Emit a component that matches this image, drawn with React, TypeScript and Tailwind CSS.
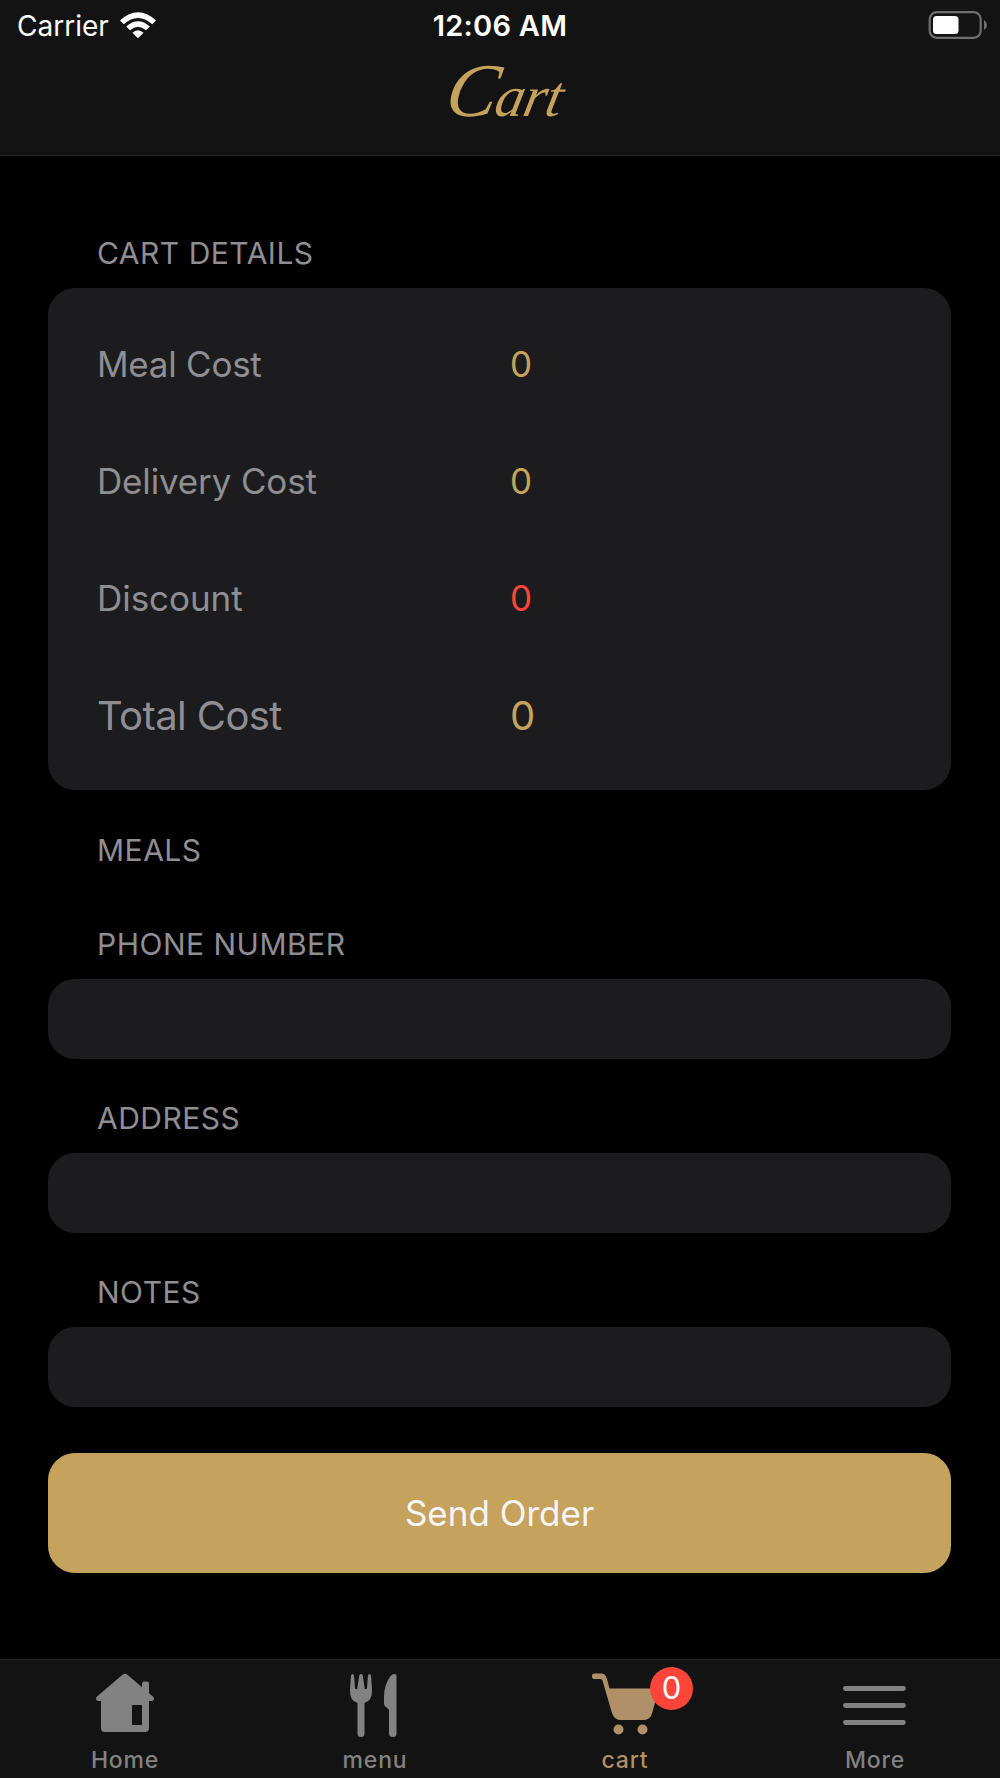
import type { ReactNode } from 'react';

const costs = [
  { label: 'Meal Cost', value: 0, labelStyle: 'text-[35px] tracking-[-0.25px]', valueStyle: 'text-[35px] text-[#c6a35d]' },
  { label: 'Delivery Cost', value: 0, labelStyle: 'text-[35px] tracking-[-0.15px]', valueStyle: 'text-[35px] text-[#c6a35d]' },
  { label: 'Discount', value: 0, labelStyle: 'text-[35px] tracking-[-0.05px]', valueStyle: 'text-[35px] text-[#ff453a]' },
  { label: 'Total Cost', value: 0, labelStyle: 'text-[40px] tracking-[-0.6px]', valueStyle: 'text-[40px] text-[#c6a35d]' },
];

const fields = ['Phone Number', 'Address', 'Notes'];

function StatusBar() {
  return (
    <div className="grid h-[52px] grid-cols-3 items-center text-white">
      <div className="flex items-center gap-[10px] pl-[17px]">
        <span className="text-[28px]">Carrier</span>
        <svg className="-mt-[3px]" width="38" height="28" viewBox="0 0 38 28" fill="currentColor">
          <path d="M1 9.5Q19 -6.8 37 9.5L33.2 13.2Q19 0.6 4.8 13.2Z" />
          <path d="M7.2 15.6Q19 5 30.8 15.6L27 19.3Q19 12 11 19.3Z" />
          <path d="M13.4 21.7Q19 16.7 24.6 21.7L19 27.3Z" />
        </svg>
      </div>
      <div className="text-center text-[29px] font-semibold tracking-[0.25px]">12:06 AM</div>
      <div className="flex justify-end pr-[13px]">
        <svg className="-mt-[3px]" width="60" height="28" viewBox="0 0 60 28">
          <rect x="2.7" y="1.2" width="51" height="25.6" rx="7" fill="none" stroke="#6f6f6f" strokeWidth="2.2" />
          <rect x="6" y="5" width="25.5" height="18" rx="3.5" fill="#fff" />
          <path d="M57 9Q60 11 60 14Q60 17 57 19Z" fill="#6f6f6f" />
        </svg>
      </div>
    </div>
  );
}

function SectionTitle({ children }: { children: ReactNode }) {
  return (
    <h2 className="pl-[49px] text-[30px] leading-[36px] tracking-[0.5px] text-[#8e8e93] uppercase">{children}</h2>
  );
}

function HomeIcon() {
  return (
    <svg width="70" height="70" viewBox="0 0 70 70" fill="currentColor">
      <path
        fillRule="evenodd"
        d="M32.5 4.8Q35 2.8 37.5 4.8L52 17.2V13.5Q52 11.5 54 11.5H57Q59 11.5 59 13.5V23.2L63.2 26.8Q65 28.7 63.5 30.3Q63 31 61.5 31H59V58Q59 62 55 62H15Q11 62 11 58V31H8Q6 30.5 6 28.5Q6 27.5 7 26.5ZM42 35V55H52V35Z"
      />
    </svg>
  );
}

function MenuIcon() {
  return (
    <svg width="70" height="70" viewBox="0 0 70 70" fill="currentColor">
      <path d="M12.5 4Q14 4 14.2 7L15 18.5Q16.2 20 17.3 18.5L19 7Q19.2 4 21 4Q22.8 4 23 7L24.7 18.5Q25.8 20 27 18.5L27.8 7Q28 4 29.5 4Q31 4 31.2 7L32 20Q32.5 30.5 24.5 33V63.5Q24.5 67 21 67Q17.5 67 17.5 63.5V33Q9.5 30.5 10 20L10.8 7Q11 4 12.5 4Z" />
      <path d="M56.5 6V63.5Q56.5 67 53 67Q49 67 49 63.5V40.5Q49 39 46.5 37.5Q44 36 44 33.5V27Q44 15 50.5 6Q52.5 4 54.5 4Q56.5 4 56.5 6Z" />
    </svg>
  );
}

function CartIcon() {
  return (
    <svg width="70" height="70" viewBox="0 0 70 70" fill="currentColor">
      <path d="M4.5 3.5H11Q15.5 3.5 16.8 8.5L19.5 18.5H68.5L62.5 42Q60.5 50 54 50H30Q24.5 50 22 43L12.5 10.5Q12 9 10.5 9H4.5Q2 9 2 6.2Q2 3.5 4.5 3.5Z" />
      <circle cx="28.5" cy="59.5" r="5" />
      <circle cx="52.5" cy="59.5" r="5" />
    </svg>
  );
}

function MoreIcon() {
  return (
    <svg width="70" height="70" viewBox="0 0 70 70" stroke="currentColor" strokeWidth="4.8" strokeLinecap="round">
      <path d="M5.4 18.5H63.4M5.4 35.5H63.4M5.4 52.5H63.4" />
    </svg>
  );
}

const tabs = [
  { label: 'Home', icon: <HomeIcon />, color: 'text-[#828282]' },
  { label: 'menu', icon: <MenuIcon />, color: 'text-[#828282]' },
  { label: 'cart', icon: <CartIcon />, color: 'text-[#b09068]', badge: 0 },
  { label: 'More', icon: <MoreIcon />, color: 'text-[#828282]' },
];

export default function App() {
  return (
    <div className="flex h-[1778px] w-[1000px] flex-col overflow-hidden bg-black font-['Inter',sans-serif]">
      <header className="h-[156px] shrink-0 border-b border-[#202020] bg-[#131313]">
        <StatusBar />
        <h1 className="-skew-x-12 pl-[10px] text-center font-['Snell_Roundhand','Liberation_Serif',serif] text-[58px] leading-[84px] tracking-[-0.5px] text-[#c6a35d] italic">
          <span className="text-[76px] leading-none tracking-[-1px]">C</span>art
        </h1>
      </header>

      <main className="flex-1 pt-[79px] pr-[49px] pl-12">
        <SectionTitle>Cart Details</SectionTitle>
        <div className="mt-[17px] h-[502px] rounded-[27px] bg-[#1c1c1e] py-[17.5px] pl-[49px]">
          {costs.map(cost => (
            <div key={cost.label} className="grid h-[117.2px] grid-cols-[413px_1fr] items-center">
              <span className={`text-[#8e8e93] ${cost.labelStyle}`}>{cost.label}</span>
              <span className={cost.valueStyle}>{cost.value}</span>
            </div>
          ))}
        </div>

        <div className="mt-[42px] mb-[58px]">
          <SectionTitle>Meals</SectionTitle>
        </div>

        {fields.map(field => (
          <label key={field} className="mb-[41.5px] block">
            <SectionTitle>{field}</SectionTitle>
            <input className="mt-[17px] block h-[79.5px] w-full rounded-[27px] bg-[#1c1c1e] px-[49px] text-[35px] text-white outline-none" />
          </label>
        ))}

        <button className="mt-[46px] block h-[120.5px] w-full rounded-[27px] bg-[#c6a35d] text-[35px] text-[#f6f5f8]">
          Send Order
        </button>
      </main>

      <nav className="grid h-[119px] shrink-0 grid-cols-4 border-t border-[#272727] bg-[#131313]">
        {tabs.map(tab => (
          <div key={tab.label} className={`flex flex-col items-center pt-[10px] ${tab.color}`}>
            <div className="relative">
              {tab.icon}
              {tab.badge !== undefined && (
                <span className="absolute -top-[3px] left-[60px] flex size-[43px] items-center justify-center rounded-full bg-[#ff453a] text-[31px] text-white">
                  {tab.badge}
                </span>
              )}
            </div>
            <span className="mt-[6px] text-[23px] leading-[28px] font-medium tracking-[0.8px]">{tab.label}</span>
          </div>
        ))}
      </nav>
    </div>
  );
}
